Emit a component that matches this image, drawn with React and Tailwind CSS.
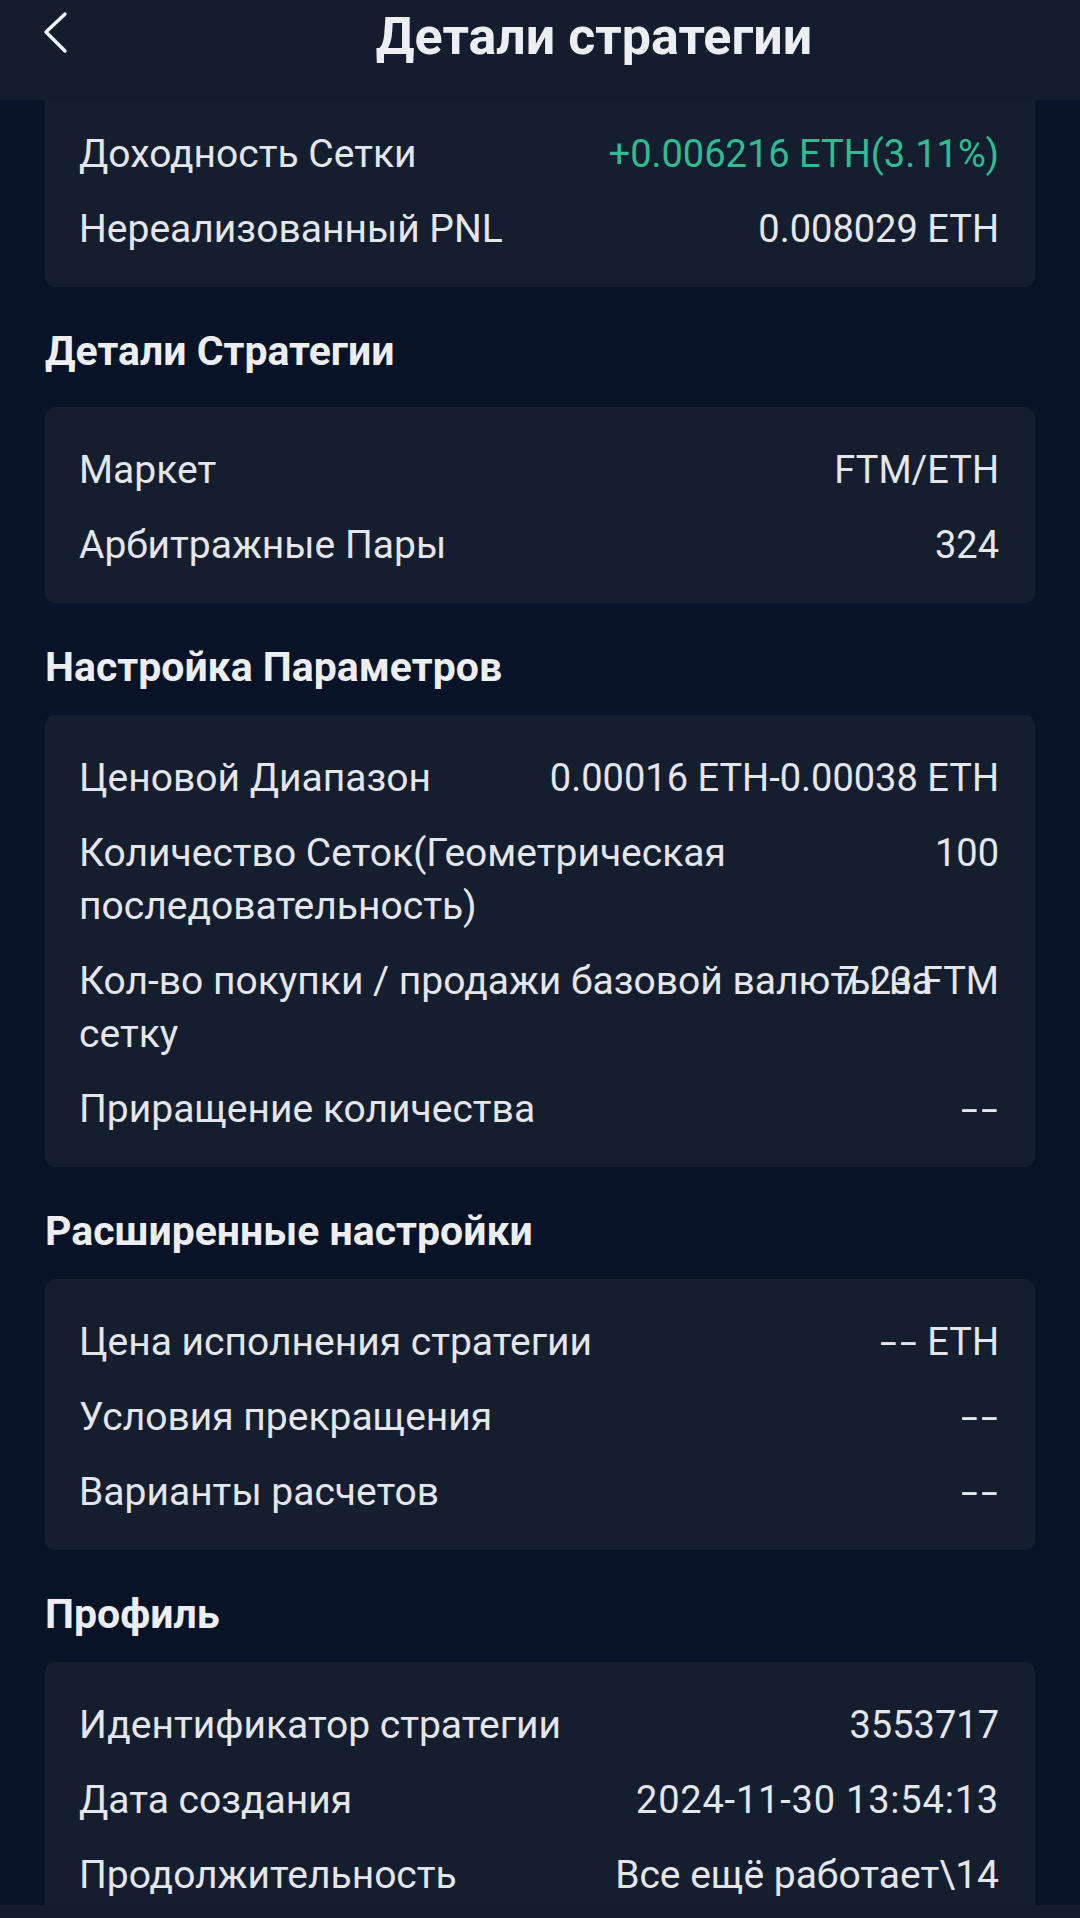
const rows1 = [
  { label: 'Доходность Сетки', value: '+0.006216 ETH(3.11%)', green: true },
  { label: 'Нереализованный PNL', value: '0.008029 ETH' },
]

const sections = [
  {
    title: 'Детали Стратегии',
    gap: 'mb-[30px]',
    rows: [
      { label: 'Маркет', value: 'FTM/ETH' },
      { label: 'Арбитражные Пары', value: '324' },
    ],
  },
  {
    title: 'Настройка Параметров',
    gap: 'mb-[22px]',
    rows: [
      { label: 'Ценовой Диапазон', value: '0.00016 ETH-0.00038 ETH' },
      { label: 'Количество Сеток(Геометрическая последовательность)', value: '100' },
      { label: 'Кол-во покупки / продажи базовой валюты на сетку', value: '7.23 FTM' },
      { label: 'Приращение количества', dash: '' },
    ],
  },
  {
    title: 'Расширенные настройки',
    gap: 'mb-[22px]',
    rows: [
      { label: 'Цена исполнения стратегии', dash: ' ETH' },
      { label: 'Условия прекращения', dash: '' },
      { label: 'Варианты расчетов', dash: '' },
    ],
  },
  {
    title: 'Профиль',
    gap: 'mb-[22px]',
    rows: [
      { label: 'Идентификатор стратегии', value: '3553717' },
      { label: 'Дата создания', value: '2024-11-30 13:54:13', extra: 'tracking-[0.8px]' },
      { label: 'Продолжительность', value: 'Все ещё работает\\14', extra: 'text-[39px]' },
    ],
  },
]

// the app font draws "--" noticeably wider than Roboto does
function Dashes() {
  return (
    <span className="inline-block w-[38px] text-left">
      <span className="inline-block origin-left scale-x-[1.6] tracking-[2px]">--</span>
    </span>
  )
}

function Row({ label, value, green, dash, extra = '' }) {
  return (
    <div className="grid leading-[53px]">
      <span className="[grid-area:1/1] text-[39px] text-[#e4e6ea]">{label}</span>
      <span
        className={`[grid-area:1/1] justify-self-end text-right whitespace-pre text-[38px] ${extra} ${
          green ? 'text-[#2dbd91]' : 'text-[#e4e6ea]'
        }`}
      >
        {dash !== undefined ? (
          <>
            <Dashes />
            {dash}
          </>
        ) : (
          value
        )}
      </span>
    </div>
  )
}

function Card({ rows, className = '' }) {
  return (
    <div className={`bg-[#151e2f] pl-[34px] pr-[36px] pb-[31px] flex flex-col gap-[22px] ${className}`}>
      {rows.map((r) => (
        <Row key={r.label} {...r} />
      ))}
    </div>
  )
}

export default function App() {
  return (
    <div className="w-[1080px] h-[1918px] bg-[#081327] flex flex-col overflow-hidden font-['Roboto','Noto_Sans',sans-serif]">
      <header className="h-[100px] shrink-0 bg-[#141d2e] flex items-start">
        <div className="w-[108px] h-full pl-[40px] pt-[8px]">
          <svg width="34" height="50" viewBox="0 0 34 50" fill="none">
            <polyline
              points="25,6 6,24 25,43"
              stroke="#f1f3f5"
              strokeWidth="3.5"
              strokeLinecap="round"
              strokeLinejoin="round"
            />
          </svg>
        </div>
        <h1 className="flex-1 text-center pt-[7px] text-[52px] leading-[60px] font-bold text-[#eceef1]">
          Детали стратегии
        </h1>
      </header>

      <main className="flex-1 min-h-0 overflow-hidden px-[45px]">
        <Card rows={rows1} className="pt-[28px] rounded-b-[10px]" />
        {sections.map((s) => (
          <section key={s.title}>
            <h2 className={`mt-[38px] ${s.gap} text-[41px] leading-[52px] font-bold text-[#eceef1]`}>
              {s.title}
            </h2>
            <Card rows={s.rows} className="pt-[37px] rounded-[10px]" />
          </section>
        ))}
      </main>

      <div className="h-[13px] shrink-0 bg-[#141d2e]" />
    </div>
  )
}
